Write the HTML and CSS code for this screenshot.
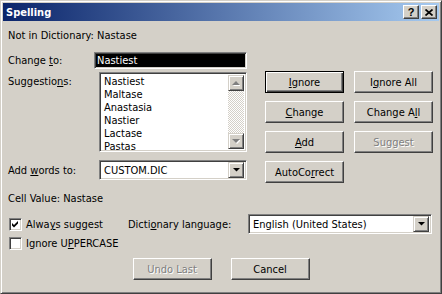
FILE: index.html
```html
<!DOCTYPE html>
<html lang="en">
<head>
    <meta charset="UTF-8">
    <title>Spelling</title>
    <link rel="stylesheet" href="styles.css">
</head>
<body>

<div class="window">
    <div class="titlebar">
        <span class="title">Spelling</span>
        <div class="caption-btns">
            <span class="cap-btn help">?</span>
            <span class="cap-btn">
                <svg width="8" height="7" viewBox="0 0 8 7"><path d="M0.5 0.5l7 6M7.5 0.5l-7 6" stroke="#000" stroke-width="1.7"/></svg>
            </span>
        </div>
    </div>

    <div class="content">
        <p class="info first">Not in Dictionary: Nastase</p>

        <div class="main">
            <div class="fields">
                <span class="lbl">Change <u>t</u>o:</span>
                <div class="field change-to"><span class="sel">Nastiest</span></div>

                <span class="lbl top">Suggestio<u>n</u>s:</span>
                <div class="field listbox">
                    <ul class="items">
                        <li>Nastiest</li>
                        <li>Maltase</li>
                        <li>Anastasia</li>
                        <li>Nastier</li>
                        <li>Lactase</li>
                        <li>Pastas</li>
                    </ul>
                    <div class="vscroll">
                        <span class="sb-btn">
                            <svg width="8" height="5" viewBox="0 0 8 5"><polygon points="4,0 8,4 0,4" fill="#fff" transform="translate(1,1)"/><polygon points="4,0 8,4 0,4" fill="#808080"/></svg>
                        </span>
                        <span class="track"></span>
                        <span class="sb-btn">
                            <svg width="8" height="5" viewBox="0 0 8 5"><polygon points="0,0 8,0 4,4" fill="#fff" transform="translate(1,1)"/><polygon points="0,0 8,0 4,4" fill="#808080"/></svg>
                        </span>
                    </div>
                </div>

                <span class="lbl bottom">Add <u>w</u>ords to:</span>
                <div class="field combo">
                    <span class="val">CUSTOM.DIC</span>
                    <span class="drop"><svg width="7" height="4" viewBox="0 0 7 4"><polygon points="0,0 7,0 3.5,3.5" fill="#000"/></svg></span>
                </div>
            </div>

            <div class="actions">
                <button class="btn default"><u>I</u>gnore</button>
                <button class="btn">I<u>g</u>nore All</button>
                <button class="btn"><u>C</u>hange</button>
                <button class="btn">Change A<u>l</u>l</button>
                <button class="btn"><u>A</u>dd</button>
                <button class="btn" disabled>Suggest</button>
                <button class="btn">AutoCo<u>r</u>rect</button>
            </div>
        </div>

        <p class="info cell">Cell Value: Nastase</p>

        <div class="options">
            <div class="checks">
                <label class="check">
                    <span class="box"><svg width="7" height="7" viewBox="0 0 7 7"><path d="M0 2L2 4L6 0V2.5L2 6.5L0 4.5Z" fill="#000"/></svg></span>
                    <span>Alwa<u>y</u>s suggest</span>
                </label>
                <label class="check">
                    <span class="box"></span>
                    <span>Ignore U<u>P</u>PERCASE</span>
                </label>
            </div>
            <div class="lang-row">
                <span class="lbl dict">Dicti<u>o</u>nary language:</span>
                <div class="field combo lang">
                    <span class="val">English (United States)</span>
                    <span class="drop"><svg width="7" height="4" viewBox="0 0 7 4"><polygon points="0,0 7,0 3.5,3.5" fill="#000"/></svg></span>
                </div>
            </div>
        </div>

        <div class="footer">
            <button class="btn" disabled>Undo Last</button>
            <button class="btn">Cancel</button>
        </div>
    </div>
</div>

</body>
</html>
```

FILE: styles.css
```css
body {
    margin: 0;
    background: #d4d0c8;
    font-family: "DejaVu Sans Condensed", "Liberation Sans", sans-serif;
    font-size: 11px;
    color: #000;
}
u {
    text-decoration-thickness: 1px;
    text-underline-offset: 1px;
}
.window {
    width: 442px;
    height: 294px;
    box-sizing: border-box;
    background: #d4d0c8;
    border: 1px solid;
    border-color: #d4d0c8 #404040 #404040 #d4d0c8;
    box-shadow: inset 1px 1px #fff, inset -1px -1px #808080;
    padding: 2px;
}
.titlebar {
    height: 18px;
    display: flex;
    align-items: center;
    justify-content: space-between;
    background: linear-gradient(to right, #0a246a, #a6caf0);
    padding: 0 2px 0 3px;
}
.title {
    color: #fff;
    font-weight: bold;
}
.caption-btns {
    display: flex;
    gap: 2px;
}
.cap-btn {
    width: 16px;
    height: 14px;
    box-sizing: border-box;
    display: flex;
    align-items: center;
    justify-content: center;
    background: #d4d0c8;
    border: 1px solid;
    border-color: #fff #404040 #404040 #fff;
    box-shadow: inset -1px -1px #808080;
}
.cap-btn.help {
    font-weight: bold;
    font-size: 11px;
    line-height: 12px;
    font-family: "Liberation Sans", sans-serif;
}
.content {
    padding: 0 5px;
}
.info {
    margin: 0;
    line-height: 13px;
}
.info.first {
    margin-top: 8px;
}
.info.cell {
    margin-top: 9px;
}
.main {
    display: flex;
    margin-top: 10px;
}
.fields {
    display: grid;
    grid-template-columns: 91px 148px;
    grid-template-rows: 17px 80px 25px;
    row-gap: 3px;
}
.lbl {
    line-height: 13px;
    align-self: center;
}
.lbl.top {
    align-self: start;
    padding-top: 3px;
}
.lbl.bottom {
    align-self: end;
    padding-bottom: 3px;
}
.field {
    box-sizing: border-box;
    border: 1px solid;
    border-color: #808080 #fff #fff #808080;
    box-shadow: inset 1px 1px #404040, inset -1px -1px #d4d0c8;
    background: #fff;
}
.change-to {
    margin-left: -5px;
    padding: 2px;
    background: #000;
    display: flex;
    align-items: center;
}
.change-to .sel {
    color: #fff;
    line-height: 13px;
}
.listbox {
    display: flex;
    padding: 2px;
}
.items {
    flex: 1;
    list-style: none;
    margin: 0;
    padding: 0 2px;
}
.items li {
    line-height: 13px;
}
.vscroll {
    width: 16px;
    display: flex;
    flex-direction: column;
}
.sb-btn {
    width: 16px;
    height: 16px;
    box-sizing: border-box;
    display: flex;
    align-items: center;
    justify-content: center;
    background: #d4d0c8;
    border: 1px solid;
    border-color: #d4d0c8 #404040 #404040 #d4d0c8;
    box-shadow: inset 1px 1px #fff, inset -1px -1px #808080;
}
.track {
    flex: 1;
    background: repeating-conic-gradient(#d4d0c8 0 25%, #fff 0 50%) 0 0 / 2px 2px;
}
.combo {
    display: flex;
    align-items: center;
    padding: 2px;
    height: 20px;
    align-self: end;
}
.combo .val {
    flex: 1;
    padding-left: 2px;
    line-height: 13px;
}
.drop {
    width: 16px;
    height: 16px;
    box-sizing: border-box;
    display: flex;
    align-items: center;
    justify-content: center;
    background: #d4d0c8;
    border: 1px solid;
    border-color: #d4d0c8 #404040 #404040 #d4d0c8;
    box-shadow: inset 1px 1px #fff, inset -1px -1px #808080;
}
.actions {
    display: grid;
    grid-template-columns: 79px 79px;
    grid-auto-rows: 22px;
    column-gap: 10px;
    row-gap: 8px;
    margin: 19px 0 0 18px;
    align-content: start;
}
.btn {
    font: inherit;
    color: #000;
    width: 79px;
    height: 22px;
    padding: 0;
    background: #d4d0c8;
    border: 1px solid;
    border-color: #fff #404040 #404040 #fff;
    box-shadow: inset -1px -1px #808080;
}
.btn.default {
    border-color: #000;
    box-shadow: inset 1px 1px #fff, inset -1px -1px #404040, inset -2px -2px #808080;
}
.btn:disabled {
    color: #808080;
    text-shadow: 1px 1px #fff;
}
.options {
    display: flex;
    margin-top: 9px;
}
.checks {
    width: 120px;
    padding-top: 4px;
    display: flex;
    flex-direction: column;
    gap: 6px;
}
.check {
    display: flex;
    align-items: center;
    gap: 4px;
    height: 13px;
    padding-left: 1px;
}
.box {
    width: 13px;
    height: 13px;
    box-sizing: border-box;
    display: flex;
    align-items: center;
    justify-content: center;
    background: #fff;
    border: 1px solid;
    border-color: #808080 #fff #fff #808080;
    box-shadow: inset 1px 1px #404040, inset -1px -1px #d4d0c8;
}
.lang-row {
    display: flex;
    align-items: center;
    height: 20px;
}
.dict {
    width: 120px;
}
.combo.lang {
    width: 184px;
}
.footer {
    display: flex;
    justify-content: center;
    gap: 19px;
    margin-top: 8px;
}
```
